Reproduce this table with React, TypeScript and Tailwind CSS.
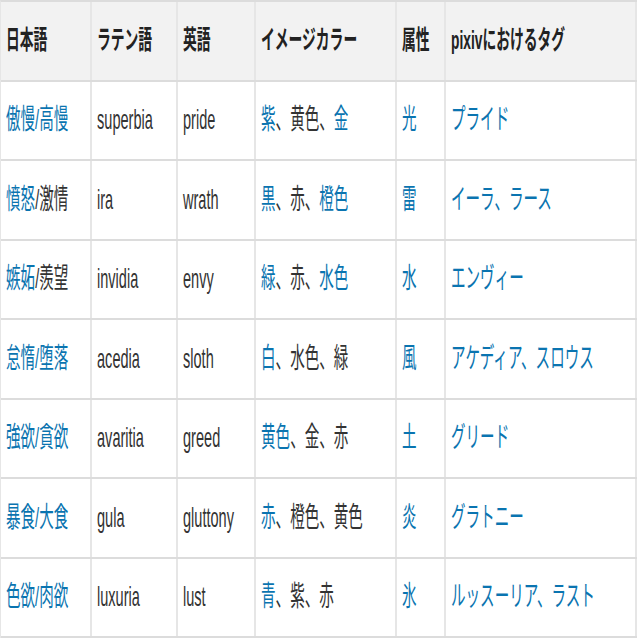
type Piece = { t: string; link?: boolean };
type Row = Piece[][];

const HEAD = ["日本語", "ラテン語", "英語", "イメージカラー", "属性", "pixivにおけるタグ"];

const L = (t: string): Piece => ({ t, link: true });
const T = (t: string): Piece => ({ t });

const ROWS: Row[] = [
  [[L("傲慢/高慢")], [T("superbia")], [T("pride")], [L("紫"), T("、黄色、"), L("金")], [L("光")], [L("プライド")]],
  [[L("憤怒"), T("/激情")], [T("ira")], [T("wrath")], [L("黒"), T("、赤、"), L("橙色")], [L("雷")], [L("イーラ、ラース")]],
  [[L("嫉妬"), T("/羨望")], [T("invidia")], [T("envy")], [L("緑"), T("、赤、"), L("水色")], [L("水")], [L("エンヴィー")]],
  [[L("怠惰/堕落")], [T("acedia")], [T("sloth")], [L("白"), T("、水色、緑")], [L("風")], [L("アケディア、スロウス")]],
  [[L("強欲/貪欲")], [T("avaritia")], [T("greed")], [L("黄色"), T("、金、赤")], [L("土")], [L("グリード")]],
  [[L("暴食/大食")], [T("gula")], [T("gluttony")], [L("赤"), T("、橙色、黄色")], [L("炎")], [L("グラトニー")]],
  [[L("色欲/肉欲")], [T("luxuria")], [T("lust")], [L("青"), T("、紫、赤")], [L("氷")], [L("ルッスーリア、ラスト")]],
];

const COLS = ["w-[91px]", "w-[86px]", "w-[78px]", "w-[141px]", "w-[49px]", "w-[191px]"];

export default function App() {
  return (
    <div className="h-[638px] w-[638px] overflow-hidden bg-white font-['Liberation_Sans','Noto_Sans_CJK_JP',sans-serif]">
      <div className="w-[637px] border-t-2 border-l border-t-[#dcdcdc] border-l-[#e6e6e6]">
        {/* header */}
        <div className="flex h-[79.5px] border-b-2 border-[#dcdcdc] bg-[#f2f2f2]">
          {HEAD.map((h, i) => (
            <div
              key={h}
              className={`${COLS[i]} flex shrink-0 items-center border-r-2 border-[#e6e6e6] pl-[5px]`}
            >
              <span className="inline-block origin-left scale-x-[0.53] whitespace-nowrap text-[26px] font-bold text-[#222]">
                {h}
              </span>
            </div>
          ))}
        </div>

        {ROWS.map((row, r) => (
          <div key={r} className="flex h-[79.5px] border-b-2 border-[#dcdcdc]">
            {row.map((cell, i) => (
              <div
                key={i}
                className={`${COLS[i]} flex shrink-0 items-center border-r-2 border-[#e6e6e6] pl-[5px]`}
              >
                <span className="inline-block origin-left scale-x-[0.52] whitespace-nowrap text-[28px] text-[#333]">
                  {cell.map((p, k) =>
                    p.link ? (
                      <a key={k} className="text-[#0a74b0]">
                        {p.t}
                      </a>
                    ) : (
                      <span key={k}>{p.t}</span>
                    )
                  )}
                </span>
              </div>
            ))}
          </div>
        ))}
      </div>
    </div>
  );
}
